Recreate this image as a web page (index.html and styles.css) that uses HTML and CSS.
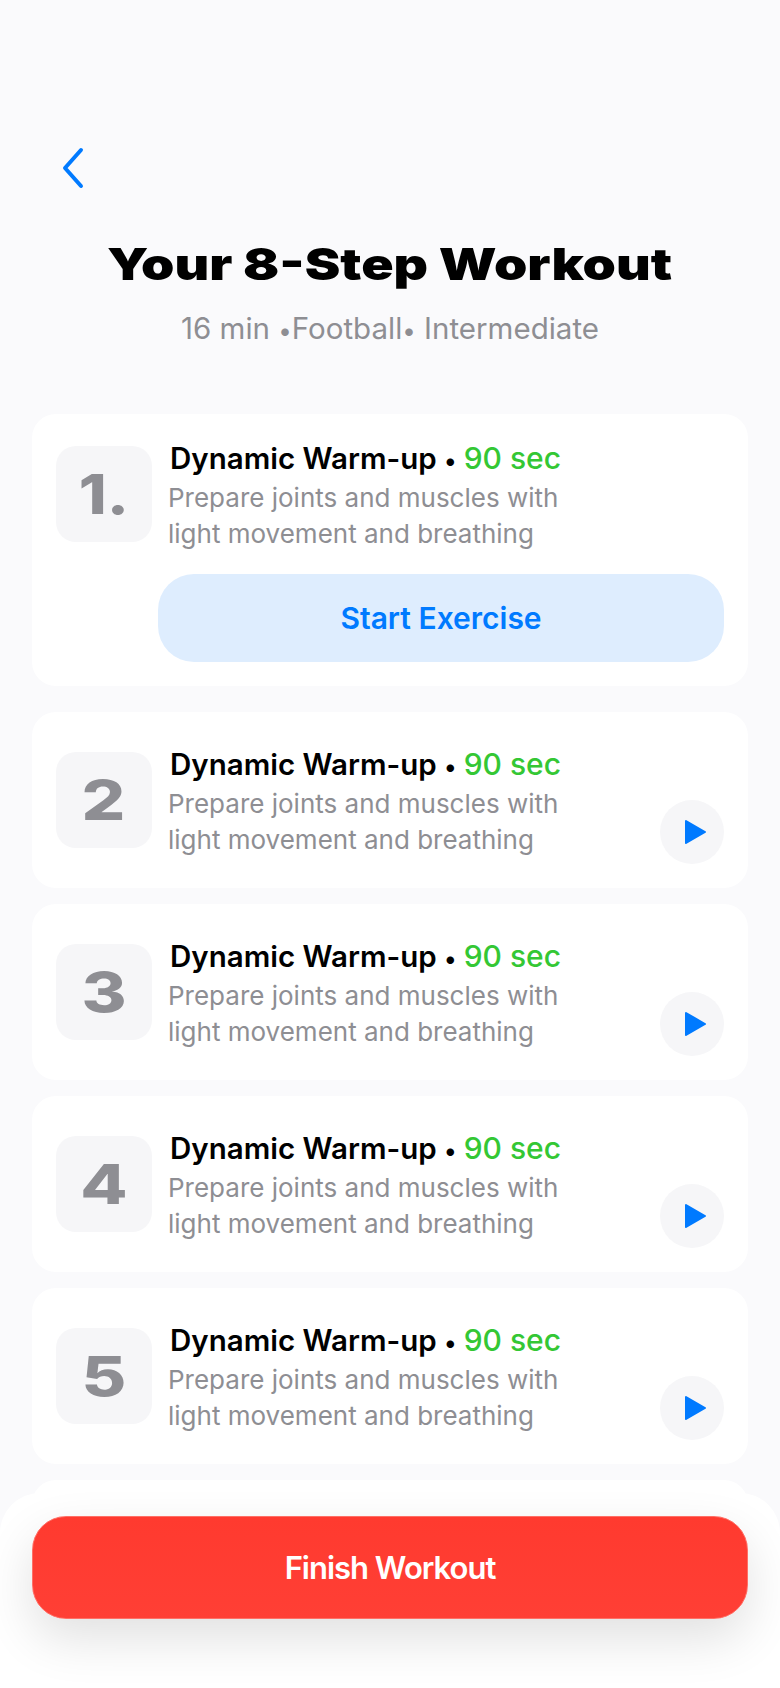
FILE: index.html
```html
<!DOCTYPE html>
<html lang="en">

<head>
	<meta charset="UTF-8">
	<title>Your 8-Step Workout</title>
	<link rel="stylesheet" href="styles.css">
</head>

<body>
	<div class="page">
		<div class="back">
			<svg width="28" height="42" viewBox="0 0 28 42" fill="none">
				<path d="M23 3 L7 21 L23 39" stroke="#007aff" stroke-width="4" stroke-linecap="round" stroke-linejoin="round" />
			</svg>
		</div>
		<div class="head">
			<h1 class="title">Your 8-Step Workout</h1>
			<p class="sub">16 min <span class="dot">•</span>Football<span class="dot">•</span> Intermediate</p>
		</div>
		<div class="list">
			<div class="card card-first">
				<div class="row">
					<div class="num num-first"><span>1.</span></div>
					<div class="info">
						<div class="name">Dynamic Warm-up <span class="dot">•</span> <span class="time">90 sec</span></div>
						<div class="desc">Prepare joints and muscles with<br>light movement and breathing</div>
					</div>
				</div>
				<div class="start">Start Exercise</div>
			</div>
			<div class="card">
				<div class="row">
					<div class="num"><span>2</span></div>
					<div class="info">
						<div class="name">Dynamic Warm-up <span class="dot">•</span> <span class="time">90 sec</span></div>
						<div class="desc">Prepare joints and muscles with<br>light movement and breathing</div>
					</div>
					<div class="play"><svg width="24" height="26" viewBox="0 0 24 26"><path d="M3 2 L22 13 L3 24 Z" fill="#007aff" stroke="#007aff" stroke-width="2" stroke-linejoin="round" /></svg></div>
				</div>
			</div>
			<div class="card">
				<div class="row">
					<div class="num"><span>3</span></div>
					<div class="info">
						<div class="name">Dynamic Warm-up <span class="dot">•</span> <span class="time">90 sec</span></div>
						<div class="desc">Prepare joints and muscles with<br>light movement and breathing</div>
					</div>
					<div class="play"><svg width="24" height="26" viewBox="0 0 24 26"><path d="M3 2 L22 13 L3 24 Z" fill="#007aff" stroke="#007aff" stroke-width="2" stroke-linejoin="round" /></svg></div>
				</div>
			</div>
			<div class="card">
				<div class="row">
					<div class="num"><span>4</span></div>
					<div class="info">
						<div class="name">Dynamic Warm-up <span class="dot">•</span> <span class="time">90 sec</span></div>
						<div class="desc">Prepare joints and muscles with<br>light movement and breathing</div>
					</div>
					<div class="play"><svg width="24" height="26" viewBox="0 0 24 26"><path d="M3 2 L22 13 L3 24 Z" fill="#007aff" stroke="#007aff" stroke-width="2" stroke-linejoin="round" /></svg></div>
				</div>
			</div>
			<div class="card">
				<div class="row">
					<div class="num"><span>5</span></div>
					<div class="info">
						<div class="name">Dynamic Warm-up <span class="dot">•</span> <span class="time">90 sec</span></div>
						<div class="desc">Prepare joints and muscles with<br>light movement and breathing</div>
					</div>
					<div class="play"><svg width="24" height="26" viewBox="0 0 24 26"><path d="M3 2 L22 13 L3 24 Z" fill="#007aff" stroke="#007aff" stroke-width="2" stroke-linejoin="round" /></svg></div>
				</div>
			</div>
			<div class="card"></div>
		</div>
		<div class="footer">
			<div class="finish">Finish Workout</div>
		</div>
	</div>
</body>

</html>
```
FILE: styles.css
```css
* {
	margin: 0;
	padding: 0;
	box-sizing: border-box;
}

body {
	background: #fafafc;
	font-family: Inter, "Noto Sans", sans-serif;
}

.page {
	position: relative;
	height: 1688px;
	overflow: hidden;
	padding: 147px 32px 0;
}

.back {
	height: 42px;
	padding-left: 26px;
}

.head {
	margin-top: 48px;
	text-align: center;
}

.title {
	display: inline-block;
	font-size: 44px;
	line-height: 54px;
	font-weight: 900;
	color: #000;
	white-space: nowrap;
	transform: scaleX(1.215);
}

.sub {
	margin-top: 19px;
	font-size: 29.5px;
	line-height: 36px;
	color: #8e8e93;
}

.dot {
	font-size: 24px;
	line-height: 0;
}

.list {
	margin-top: 68px;
	display: flex;
	flex-direction: column;
	gap: 16px;
}

.card {
	background: #fff;
	border-radius: 24px;
	padding: 40px 24px 24px;
	height: 176px;
	flex: none;
}

.card-first {
	padding-top: 32px;
	height: 272px;
	margin-bottom: 10px;
}

.row {
	display: flex;
}

.num {
	width: 96px;
	height: 96px;
	flex: none;
	background: #f6f6f8;
	border-radius: 20px;
	display: flex;
	align-items: center;
	justify-content: center;
	font-size: 55px;
	font-weight: 800;
	color: #8e8e93;
}

.num span {
	display: inline-block;
	transform: scaleX(1.25);
}

.num-first span {
	transform: scaleX(1.15);
}

.info {
	flex: 1;
	padding-left: 16px;
	margin-top: -6px;
}

.name {
	font-size: 29.5px;
	line-height: 36px;
	font-weight: 600;
	color: #000;
	padding-left: 2px;
	white-space: nowrap;
}

.time {
	font-size: 30px;
	line-height: 0;
	font-weight: 500;
	color: #34c734;
}

.desc {
	margin-top: 4px;
	font-size: 26px;
	line-height: 36px;
	color: #8e8e93;
	white-space: nowrap;
}

.start {
	margin: 22px 0 0 102px;
	height: 88px;
	border-radius: 36px;
	background: #deedfe;
	color: #007aff;
	font-size: 30px;
	font-weight: 600;
	display: flex;
	align-items: center;
	justify-content: center;
}

.play {
	width: 64px;
	height: 64px;
	flex: none;
	margin-top: 48px;
	padding-left: 5px;
	border-radius: 50%;
	background: #f6f6f8;
	display: flex;
	align-items: center;
	justify-content: center;
}

.footer {
	position: absolute;
	left: 0;
	right: 0;
	top: 1493px;
	bottom: 0;
	padding: 23px 32px 0;
	background: #fff;
	border-radius: 40px 40px 0 0;
}

.finish {
	height: 103px;
	border-radius: 34px;
	background: linear-gradient(#ff3a2f, #ff3f35);
	border: 1px solid #ff6f66;
	color: #fff;
	font-size: 31px;
	font-weight: 600;
	letter-spacing: -1px;
	display: flex;
	align-items: center;
	justify-content: center;
	box-shadow: 0 20px 50px rgba(0, 0, 0, 0.12);
}
```
